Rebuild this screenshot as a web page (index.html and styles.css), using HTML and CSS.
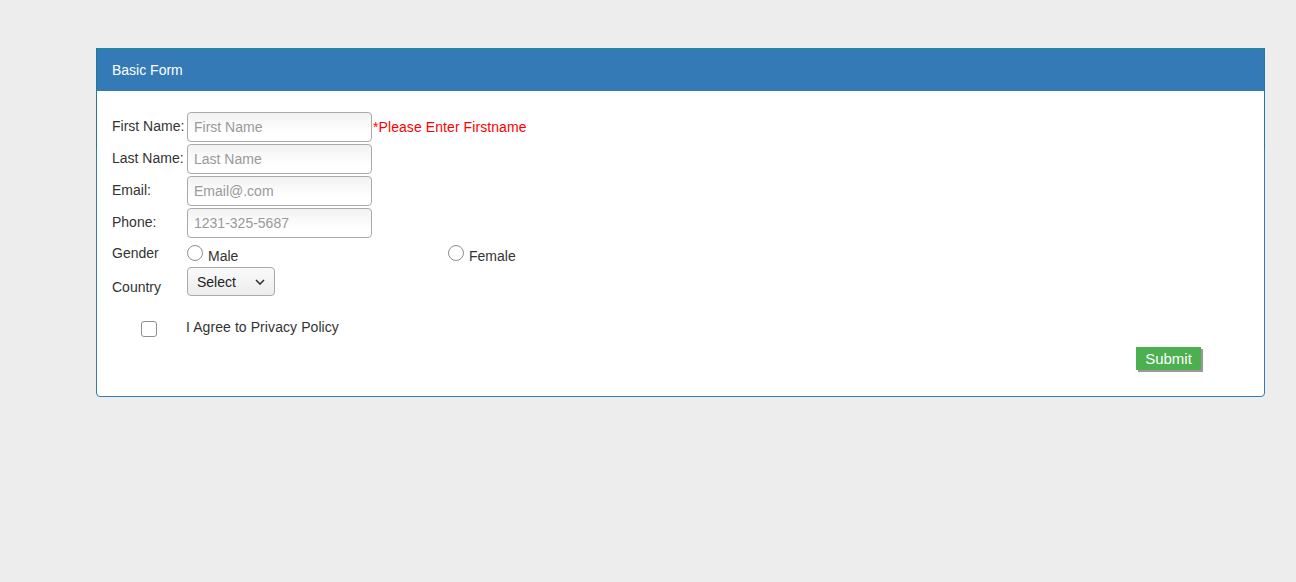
FILE: index.html
```html
<!DOCTYPE html>
<html>
<head>
<meta charset="utf-8">
<link rel="stylesheet" href="styles.css">
</head>
<body>
<div class="panel">
  <div class="panel-heading">Basic Form</div>
  <div class="panel-body">
    <div class="row text-row">
      <label class="lbl">First Name:</label>
      <input class="field" type="text" placeholder="First Name">
      <span class="error">*Please Enter Firstname</span>
    </div>
    <div class="row text-row">
      <label class="lbl">Last Name:</label>
      <input class="field" type="text" placeholder="Last Name">
    </div>
    <div class="row text-row">
      <label class="lbl">Email:</label>
      <input class="field" type="text" placeholder="Email@.com">
    </div>
    <div class="row text-row">
      <label class="lbl">Phone:</label>
      <input class="field" type="text" placeholder="1231-325-5687">
    </div>
    <div class="row gender-row">
      <label class="lbl">Gender</label>
      <span class="opt opt-male"><span class="radio"></span><span class="opt-text">Male</span></span>
      <span class="opt"><span class="radio"></span><span class="opt-text">Female</span></span>
    </div>
    <div class="row country-row">
      <label class="lbl lbl-country">Country</label>
      <div class="select">Select <svg class="chev" width="10" height="6" viewBox="0 0 10 6"><path d="M1 1 L5 5 L9 1" fill="none" stroke="#333" stroke-width="1.6"/></svg></div>
    </div>
    <div class="row agree-row">
      <span class="checkbox"></span>
      <span class="agree-text">I Agree to Privacy Policy</span>
    </div>
    <div class="row submit-row">
      <button class="submit">Submit</button>
    </div>
  </div>
</div>
</body>
</html>
```
FILE: styles.css
```css
html, body {
  margin: 0;
  padding: 0;
}
body {
  background: #ededed;
  font-family: "Liberation Sans", Arial, sans-serif;
  font-size: 14px;
  color: #333;
  padding: 48px 30px 0 96px;
}
.panel {
  position: relative;
  width: 1167px;
  height: 347px;
  background: #fff;
  border: 1px solid #337ab7;
  border-radius: 0 0 4px 4px;
}
.panel::before {
  content: "";
  position: absolute;
  left: -1px;
  right: -1px;
  top: -1px;
  height: 100px;
  border-top: 1px solid #14918a;
  border-left: 1px solid #1f7a9a;
  border-right: 1px solid #1f7a9a;
  pointer-events: none;
}
.panel-heading {
  background: #337ab7;
  color: #fff;
  height: 42px;
  line-height: 43px;
  padding-left: 15px;
  font-size: 14px;
}
.panel-body {
  padding: 21px 0 0 15px;
}
.row {
  display: flex;
  align-items: center;
}
.text-row {
  height: 32px;
  align-items: flex-start;
}
.lbl {
  width: 75px;
  flex: none;
  line-height: 30px;
  color: #333;
}
.text-row .lbl {
  line-height: 28px;
}
.text-row:nth-child(2) .lbl {
  line-height: 29px;
}
.field {
  width: 185px;
  height: 30px;
  box-sizing: border-box;
  border: 1px solid #a9a9a9;
  border-radius: 4px;
  padding: 0 6px;
  font-family: "Liberation Sans", Arial, sans-serif;
  font-size: 14px;
  background: linear-gradient(#f2f2f2, #ffffff 70%);
  margin: 0;
}
.field::placeholder {
  color: #999;
}
.error {
  color: #f00;
  margin-left: 1px;
  line-height: 30px;
  letter-spacing: 0.08px;
}
.gender-row {
  height: 28px;
  align-items: flex-start;
}
.gender-row .lbl {
  line-height: 26px;
}
.opt {
  display: flex;
  align-items: flex-start;
}
.opt-male {
  width: 261px;
}
.radio {
  width: 14px;
  height: 14px;
  border: 1px solid #8f8f8f;
  border-radius: 50%;
  margin-top: 5px;
  background: #fff;
  flex: none;
}
.opt-text {
  margin-left: 5px;
  margin-top: 8px;
  line-height: 16px;
}
.country-row {
  height: 30px;
  align-items: flex-start;
}
.lbl-country {
  line-height: 18px;
  margin-top: 10px;
}
.select {
  width: 88px;
  height: 29px;
  box-sizing: border-box;
  border: 1px solid #a9a9a9;
  border-radius: 4px;
  background: linear-gradient(#fafafa, #ececec);
  display: flex;
  align-items: center;
  justify-content: space-between;
  padding: 0 9px 0 9px;
  color: #222;
  margin-top: -1px;
}
.chev {
  margin-top: 1px;
}
.agree-row {
  margin-top: 20px;
  height: 20px;
}
.checkbox {
  width: 14px;
  height: 14px;
  border: 1px solid #8f8f8f;
  border-radius: 3px;
  margin-left: 29px;
  margin-top: 2px;
  background: #fff;
}
.agree-text {
  margin-left: 29px;
  margin-top: -2px;
  letter-spacing: 0.08px;
}
.submit-row {
  justify-content: flex-end;
  padding-right: 63px;
  margin-top: 9px;
}
.submit {
  width: 65px;
  height: 23px;
  background: #4caf50;
  color: #fff;
  font-family: "Liberation Sans", Arial, sans-serif;
  font-size: 15px;
  border: none;
  box-shadow: 2px 2px 0 #999, -1px -1px 0 #fff;
  padding: 0;
  line-height: 23px;
}
```
